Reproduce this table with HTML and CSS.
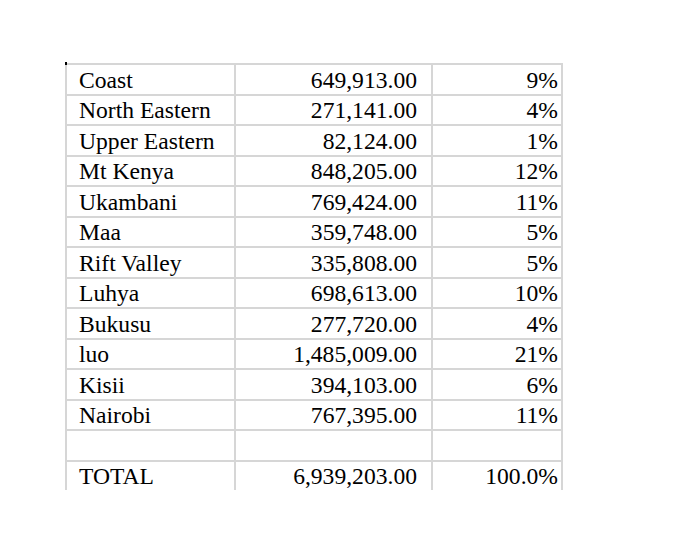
FILE: index.html
```html
<!DOCTYPE html>
<html>
<head>
<meta charset="utf-8">
<link rel="stylesheet" href="styles.css">
</head>
<body>
<div class="sheet">
  <span class="tick"></span>
  <table class="grid">
    <colgroup><col class="c1"><col class="c2"><col class="c3"></colgroup>
    <tr><td class="name">Coast</td><td class="num">649,913.00</td><td class="pct">9%</td></tr>
    <tr><td class="name">North Eastern</td><td class="num">271,141.00</td><td class="pct">4%</td></tr>
    <tr><td class="name">Upper Eastern</td><td class="num">82,124.00</td><td class="pct">1%</td></tr>
    <tr><td class="name">Mt Kenya</td><td class="num">848,205.00</td><td class="pct">12%</td></tr>
    <tr><td class="name">Ukambani</td><td class="num">769,424.00</td><td class="pct">11%</td></tr>
    <tr><td class="name">Maa</td><td class="num">359,748.00</td><td class="pct">5%</td></tr>
    <tr><td class="name">Rift Valley</td><td class="num">335,808.00</td><td class="pct">5%</td></tr>
    <tr><td class="name">Luhya</td><td class="num">698,613.00</td><td class="pct">10%</td></tr>
    <tr><td class="name">Bukusu</td><td class="num">277,720.00</td><td class="pct">4%</td></tr>
    <tr><td class="name">luo</td><td class="num">1,485,009.00</td><td class="pct">21%</td></tr>
    <tr><td class="name">Kisii</td><td class="num">394,103.00</td><td class="pct">6%</td></tr>
    <tr><td class="name">Nairobi</td><td class="num">767,395.00</td><td class="pct">11%</td></tr>
    <tr><td class="name"></td><td class="num"></td><td class="pct"></td></tr>
    <tr><td class="name">TOTAL</td><td class="num">6,939,203.00</td><td class="pct">100.0%</td></tr>
  </table>
</div>
</body>
</html>
```
FILE: styles.css
```css
html, body {
  margin: 0;
  padding: 0;
  background: #ffffff;
}
.sheet {
  position: relative;
  padding: 63px 0 0 65px;
}
.tick {
  position: absolute;
  left: 65px;
  top: 62px;
  width: 2px;
  height: 3px;
  background: #000;
}
.grid {
  border-collapse: separate;
  border-spacing: 0;
  table-layout: fixed;
  width: 498px;
  font-family: "Liberation Serif", "Times New Roman", serif;
  font-size: 23.6px;
  color: #000;
}
.c1 { width: 169px; }
.c2 { width: 197px; }
.c3 { width: 132px; }
.grid tr {
  height: 30.5px;
}
.grid td {
  padding: 0 0 2px 0;
  border-left: 2px solid #d6d6d6;
  border-top: 2px solid #d6d6d6;
  vertical-align: bottom;
  line-height: 24px;
  white-space: nowrap;
}
.grid td.name {
  padding-left: 12px;
}
.grid td.num {
  text-align: right;
  padding-right: 14px;
}
.grid td.pct {
  text-align: right;
  padding-right: 3px;
  border-right: 2px solid #d6d6d6;
}
```
